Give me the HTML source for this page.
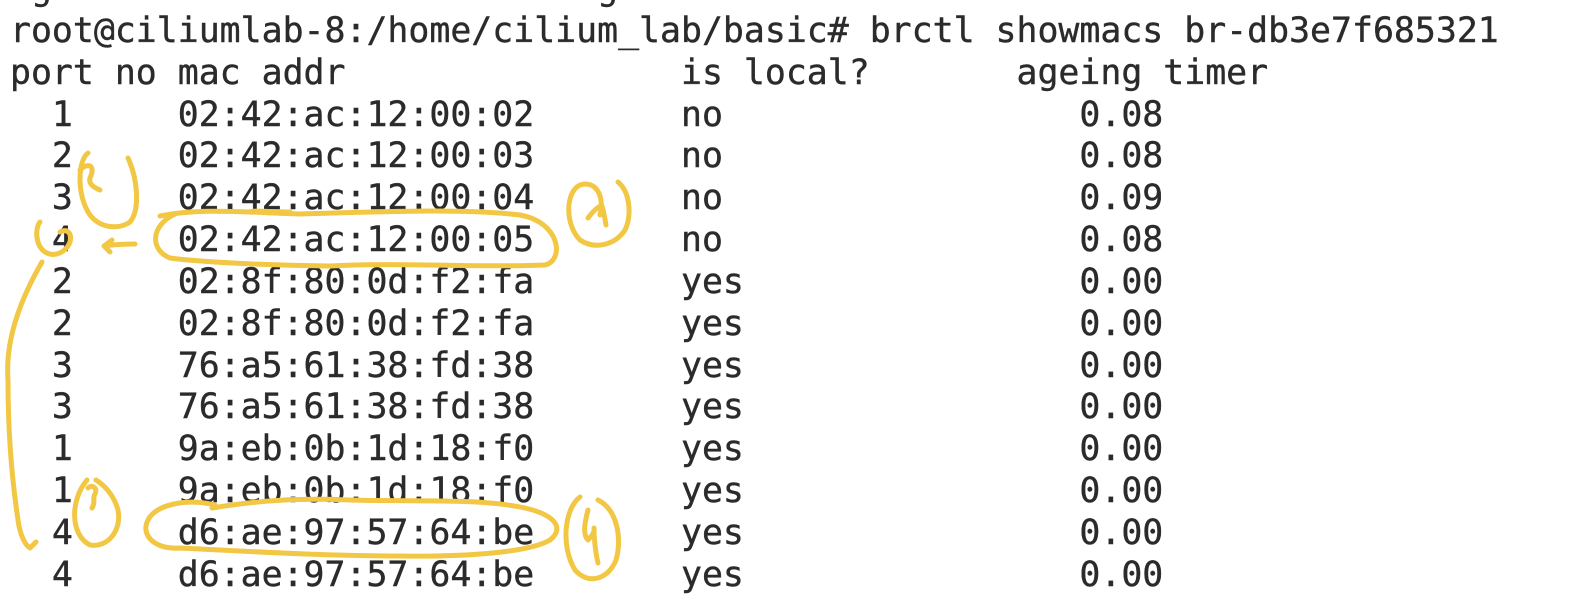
<!DOCTYPE html>
<html><head><style>
html,body{margin:0;padding:0;background:#fff;width:1576px;height:600px;overflow:hidden}
pre{position:absolute;left:10px;top:-31px;margin:0;font-family:"DejaVu Sans Mono","Liberation Mono",monospace;font-size:34.85px;line-height:41.85px;color:#2b2b2b;-webkit-text-stroke:0.4px #2b2b2b}
svg{position:absolute;left:0;top:0}
</style></head><body>
<pre> g                          g
root@ciliumlab-8:/home/cilium_lab/basic# brctl showmacs br-db3e7f685321
port no mac addr                is local?       ageing timer
  1     02:42:ac:12:00:02       no                 0.08
  2     02:42:ac:12:00:03       no                 0.08
  3     02:42:ac:12:00:04       no                 0.09
  4     02:42:ac:12:00:05       no                 0.08
  2     02:8f:80:0d:f2:fa       yes                0.00
  2     02:8f:80:0d:f2:fa       yes                0.00
  3     76:a5:61:38:fd:38       yes                0.00
  3     76:a5:61:38:fd:38       yes                0.00
  1     9a:eb:0b:1d:18:f0       yes                0.00
  1     9a:eb:0b:1d:18:f0       yes                0.00
  4     d6:ae:97:57:64:be       yes                0.00
  4     d6:ae:97:57:64:be       yes                0.00</pre>
<svg width="1576" height="600" fill="none" stroke="#f2c743" stroke-width="5" stroke-linecap="round" stroke-linejoin="round">
<path d="M88 153 C78 160 76 195 90 215 C100 228 118 230 130 222 C140 210 138 180 128 158"/>
<path d="M80 170 C88 162 96 165 90 178 C88 184 95 188 100 190"/>
<path d="M600 215 C605 195 595 180 580 185 C565 192 565 225 580 240 C595 250 615 245 625 230 C632 215 630 192 618 182"/>
<path d="M588 218 C594 210 600 205 602 206 C604 212 605 220 606 225"/>
<path d="M160 216 C200 208 240 212 300 214 C380 212 460 208 520 215 C560 222 565 260 545 265 C480 268 400 262 330 266 C260 265 200 262 170 258 C150 250 150 226 175 214"/>
<path d="M250 212 C255 210 270 212 290 212"/>
<path d="M135 244 C120 244 110 245 104 246 M112 240 L104 246 L110 252"/>
<path d="M40 222 C35 228 35 245 45 252 C55 258 66 252 70 242 C72 234 68 228 60 232"/>
<path d="M42 262 C20 300 5 340 8 380 C8 430 12 480 18 520 C20 535 25 545 30 548 M30 548 L36 542"/>
<path d="M87 480 C70 500 70 535 90 545 C108 548 122 530 118 510 C114 495 104 485 96 480"/>
<path d="M88 488 C92 484 98 488 95 494 C92 498 96 502 92 508"/>
<path d="M215 505 C185 498 155 505 148 520 C140 535 155 550 180 548 C260 552 330 556 400 556 C470 557 530 552 550 540 C565 528 555 515 525 508 C480 498 420 502 350 500 C300 498 260 500 212 508"/>
<path d="M580 497 C565 508 560 545 575 570 C588 585 608 580 616 560 C622 540 618 510 598 500"/>
<path d="M588 510 C584 525 583 535 588 540 C592 536 595 532 594 528 C594 540 596 555 598 563"/>
</svg>
</body></html>
